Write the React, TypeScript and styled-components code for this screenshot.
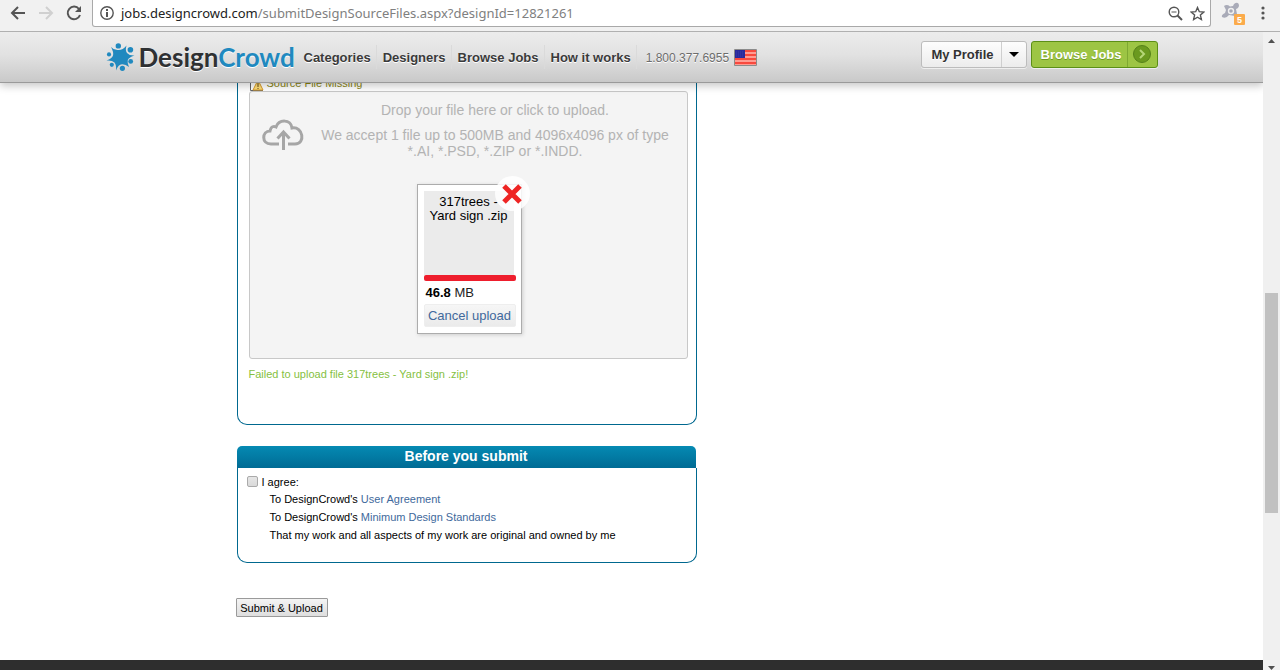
import React from 'react';
import styled, { createGlobalStyle } from 'styled-components';

const Global = createGlobalStyle`
  * { box-sizing: border-box; }
  body { margin: 0; font-family: "Liberation Sans", Arial, sans-serif; background: #fff; color: #000; }
  button { font-family: inherit; margin: 0; padding: 0; cursor: pointer; }
  a { color: #41699c; text-decoration: none; }
`;

const Window = styled.div`
  height: 100vh;
  display: flex;
  flex-direction: column;
  overflow: hidden;
`;

const Toolbar = styled.div`
  flex: none;
  height: 32px;
  display: flex;
  align-items: flex-start;
  padding: 0 9px 0 7px;
  background: #f1f1f1;
  border-bottom: 1px solid #b0b0b0;
`;

const ToolButton = styled.button<{ $width: number }>`
  width: ${(p) => p.$width}px;
  height: 26px;
  flex: none;
  display: flex;
  align-items: center;
  justify-content: center;
  border: 0;
  background: none;
  svg { display: block; }
`;

const Omnibox = styled.div`
  flex: 1;
  min-width: 0;
  height: 27px;
  display: flex;
  align-items: center;
  margin: 0 0 0 7px;
  padding: 0 2px 0 3px;
  background: #fff;
  border: 1px solid #a9a9a9;
  border-top: 0;
  border-radius: 0 0 3px 3px;
`;

const Address = styled.div`
  flex: 1;
  min-width: 0;
  padding-left: 3px;
  font: 13px/24px "Noto Sans", "Open Sans", sans-serif;
  white-space: nowrap;
  overflow: hidden;
  color: #808080;
  span { color: #222; }
`;

const Viewport = styled.div`
  flex: 1;
  min-height: 0;
  display: flex;
`;

const Page = styled.div`
  flex: 1;
  min-width: 0;
  overflow: hidden;
  display: flex;
  flex-direction: column;
`;

const Header = styled.header`
  flex: none;
  height: 51px;
  position: relative;
  z-index: 2;
  background: linear-gradient(#ececec, #e2e2e2 45%, #c9c9c9);
  border-bottom: 1px solid #9a9a9a;
  box-shadow: 0 3px 8px rgba(0, 0, 0, 0.22);
`;

const Container = styled.div`
  max-width: 1052px;
  margin: 0 auto;
`;

const HeaderRow = styled(Container)`
  height: 50px;
  display: flex;
  align-items: center;
`;

const Logo = styled.a`
  display: flex;
  align-items: center;
  width: 192px;
  gap: 4px;
  font: bold 26px/40px Lato, "Open Sans", sans-serif;
  color: #2f3133;
  text-shadow: 0 1px 0 #fff;
  span { color: #2089bf; }
  svg { flex: none; }
`;

const Nav = styled.nav`
  display: flex;
  align-items: center;
  a {
    padding: 2px 5px 0 6px;
    font: bold 13px/22px "Liberation Sans", Arial, sans-serif;
    color: #3a3a3a;
    text-shadow: 0 1px 0 #fff;
    border-right: 1px solid #dadada;
    white-space: nowrap;
  }
`;

const Phone = styled.span`
  padding: 2px 5px 0 9px;
  font: 12px/22px "Liberation Sans", Arial, sans-serif;
  color: #6c6c6c;
  text-shadow: 0 1px 0 #fff;
`;

const Actions = styled.div`
  margin-left: auto;
  display: flex;
  gap: 4px;
  padding-bottom: 6px;
`;

const SplitButton = styled.div<{ $green?: boolean }>`
  display: flex;
  height: 27px;
  border: 1px solid ${(p) => (p.$green ? '#5c8f17' : '#bcbcbc')};
  border-radius: 3px;
  background: ${(p) => (p.$green ? '#9dc544' : 'linear-gradient(#fdfdfd, #ececec)')};
  box-shadow: 0 1px 0 rgba(255, 255, 255, 0.6);
  button {
    border: 0;
    background: none;
    font-size: 13px;
    font-weight: bold;
    color: ${(p) => (p.$green ? '#fff' : '#333')};
    text-shadow: 0 1px 0 ${(p) => (p.$green ? '#6f9a25' : '#fff')};
  }
  button:first-child { padding: ${(p) => (p.$green ? '0 5px 0 9px' : '0 7px 0 9px')}; }
  button:last-child {
    width: ${(p) => (p.$green ? 30 : 25)}px;
    display: flex;
    align-items: center;
    justify-content: center;
    border-left: 1px solid ${(p) => (p.$green ? '#7fa932' : '#cfcfcf')};
  }
`;

const Main = styled(Container)`
  width: 100%;
  flex: 1 0 auto;
  margin-top: -8px;
  padding-left: 130px;
`;

const Panel = styled.section`
  width: 460px;
  margin-left: 1px;
`;

const PanelBody = styled.div<{ $bottom: number }>`
  padding: 0 8px ${(p) => p.$bottom}px 11px;
  border: 1px solid #00688f;
  border-top: 0;
  border-radius: 0 0 10px 10px;
`;

const PanelTitle = styled.h2`
  margin: 21px 1px 0 0;
  padding-bottom: 2px;
  font-size: 14px;
  line-height: 20px;
  text-align: center;
  color: #fff;
  background: linear-gradient(#058ab3, #006b94);
  border-radius: 5px 5px 0 0;
`;

const Warning = styled.div`
  height: 16px;
  display: flex;
  align-items: center;
  gap: 3px;
  font-size: 11px;
  line-height: 16px;
  color: #8a8512;
`;

const DropZone = styled.div`
  padding: 10px 10px 24px 12px;
  background: #f4f4f4;
  border: 1px solid #c8c8c8;
  border-radius: 3px;
`;

const DropHint = styled.div`
  display: flex;
  align-items: flex-start;
  gap: 10px;
  > svg { flex: none; margin-top: 17px; }
`;

const HintText = styled.div`
  flex: 1;
  font-size: 14px;
  line-height: 16px;
  text-align: center;
  color: #b3b3b3;
  p { margin: 0 0 9px; white-space: nowrap; }
`;

const FileCard = styled.div`
  position: relative;
  width: 105px;
  height: 150px;
  margin: 16px auto 0;
  padding: 6px 5px 0 6px;
  background: #fff;
  border: 1px solid #acacac;
  box-shadow: 1px 1px 4px rgba(0, 0, 0, 0.16);
  font-size: 13px;
`;

const Thumb = styled.div`
  width: 90px;
  height: 84px;
  padding: 4px 5px 0;
  line-height: 14px;
  text-align: center;
  background: #ebebeb;
`;

const Progress = styled.div`
  height: 6px;
  background: #ee1e2d;
  border-radius: 2px;
`;

const FileSize = styled.div`
  padding: 4px 2px;
  line-height: 15px;
  color: #222;
  b { color: #000; }
`;

const CancelButton = styled.button`
  display: block;
  width: 92px;
  height: 23px;
  border: 1px solid #eee;
  border-radius: 2px;
  background: linear-gradient(#f6f6f6, #ebebeb);
  font-size: 13px;
  color: #41699c;
`;

const RemoveButton = styled.button`
  position: absolute;
  top: -9px;
  right: -9px;
  width: 35px;
  height: 35px;
  display: flex;
  align-items: center;
  justify-content: center;
  border: 0;
  border-radius: 50%;
  background: rgba(255, 255, 255, 0.85);
`;

const ErrorText = styled.p`
  margin: 8px 0 0;
  font-size: 11px;
  line-height: 15px;
  color: #86bf3f;
`;

const Agreement = styled.div`
  margin-left: -2px;
  padding-top: 6px;
  font-size: 11px;
  line-height: 18px;
  label { display: flex; align-items: center; gap: 4px; line-height: 16px; }
  ul { margin: 0; padding: 0 0 0 23px; list-style: none; }
`;

const Checkbox = styled.input`
  appearance: none;
  width: 11px;
  height: 11px;
  margin: 0 0 2px;
  border: 1px solid #aaa;
  border-radius: 2px;
  background: linear-gradient(#e6e6e6, #dadada);
  &:checked { background: #00688f; }
`;

const SubmitButton = styled.button`
  display: block;
  width: 92px;
  height: 19px;
  margin-top: 35px;
  border: 1px solid #9a9a9a;
  border-radius: 1px;
  background: linear-gradient(#f4f4f4, #dedede);
  font-size: 11px;
  color: #000;
`;

const Footer = styled.footer`
  flex: none;
  height: 10px;
  background: #2e2e2e;
`;

const ScrollTrack = styled.div`
  flex: none;
  width: 17px;
  display: flex;
  flex-direction: column;
  align-items: center;
  justify-content: space-between;
  padding: 7px 2px 0;
  background: #f0f0f0;
`;

const ScrollThumb = styled.div`
  width: 13px;
  height: 35%;
  margin-top: 97px;
  background: #c1c1c1;
`;

const Arrow = ({ right }: { right?: boolean }) => (
  <svg width="16" height="16" viewBox="0 0 16 16" fill="none" stroke={right ? '#d0d0d0' : '#555'} strokeWidth="2">
    <path d={right ? 'M1 8H14M8 2L14 8L8 14' : 'M15 8H2M8 2L2 8L8 14'} />
  </svg>
);

const people = [
  [118.3, 45.9, 2.7], [130.4, 49.8, 2.8], [130.7, 61.4, 2.4], [122.4, 68.3, 2.6],
  [111.8, 64.8, 2.1], [109, 54.4, 2.1],
];

const LogoMark = () => (
  <svg width="29" height="30" viewBox="106 42 29 30" fill="#2089bf">
    <path d="M111 47Q114 50.500 118.500 50Q123 50 126.500 45.500Q125 50.500 127 53Q129.500 55.800 134.500 55.500Q128.500 57.500 127.800 60Q127 63 129 67Q125.500 64 122 64.200Q118 64.800 116 70.500Q116.500 65 114.500 62.500Q112 60 106.500 60.500Q112 58.500 113 55.500Q113.800 52 111 47Z" />
    {people.map(([x, y, r]) => <circle key={x} cx={x} cy={y} r={r} />)}
  </svg>
);

const Flag = () => (
  <svg width="23" height="17" viewBox="0 0 23 17">
    <rect width="23" height="17" rx="1" fill="#8b8b8b" />
    <rect x="1" y="1" width="21" height="15" fill="#ff9c92" />
    {[1, 5, 9, 13].map((y) => <rect key={y} x="1" y={y} width="21" height="2" fill="#f8493e" />)}
    <rect x="1" y="1" width="10" height="8" fill="#2a2a9c" />
    <path d="M2 3H10M2 5H10M2 7H10" stroke="#3c3cab" strokeDasharray="1 1" />
  </svg>
);

const CloudUpload = () => (
  <svg width="42" height="32" viewBox="0 0 42 32" fill="none" stroke="#a6a6a6" strokeWidth="3">
    <path d="M17 25H9C-1 25 0 12 8 12C9 7 12 7 14 8C17 0 29 0 30 9C41 7 44 25 33 25H26" />
    <path d="M21.500 31V14M15.500 19.500L21.500 13L27.500 19.500" />
  </svg>
);

export default function App() {
  return (
    <Window>
      <Global />
      <Toolbar>
        <ToolButton $width={22} aria-label="Back"><Arrow /></ToolButton>
        <ToolButton $width={34} aria-label="Forward"><Arrow right /></ToolButton>
        <ToolButton $width={22} aria-label="Reload">
          <svg width="16" height="16" viewBox="0 0 16 16">
            <path d="M13 4A6.300 6.300 0 1 0 14 10" fill="none" stroke="#555" strokeWidth="2" />
            <path d="M15 1V7H9Z" fill="#555" />
          </svg>
        </ToolButton>
        <Omnibox>
          <ToolButton $width={22} aria-label="Site information">
            <svg width="14" height="14" viewBox="0 0 14 14">
              <circle cx="7" cy="7" r="6.200" fill="none" stroke="#555" strokeWidth="1.400" />
              <path d="M6 6H8V11H6ZM6 3H8V5H6Z" fill="#555" />
            </svg>
          </ToolButton>
          <Address><span>jobs.designcrowd.com</span>/submitDesignSourceFiles.aspx?designId=12821261</Address>
          <ToolButton $width={22} aria-label="Zoom">
            <svg width="15" height="15" viewBox="0 0 15 15" fill="none" stroke="#555">
              <circle cx="6" cy="6" r="4.800" strokeWidth="1.400" />
              <path d="M9.500 9.500L14 14" strokeWidth="2" />
              <path d="M3.500 6H8.500" />
            </svg>
          </ToolButton>
          <ToolButton $width={22} aria-label="Bookmark">
            <svg width="15" height="15" viewBox="0 0 15 15" fill="none" stroke="#555" strokeWidth="1.400">
              <path d="M7.500 1.500L9.300 5.700L13.800 6.100L10.400 9.100L11.400 13.500L7.500 11.200L3.600 13.500L4.600 9.100L1.200 6.100L5.700 5.700Z" />
            </svg>
          </ToolButton>
        </Omnibox>
        <ToolButton $width={44} aria-label="Extension">
          <svg width="24" height="24" viewBox="0 0 24 24">
            <path d="M3 5Q6 3 9 5.500L12 5L13 3Q17 0 18 4Q18 7 15 8L16 13L14 15L8 14Q5 18 1 16Q0 14 4 12L5 9Z" fill="#a9abb8" />
            <circle cx="10" cy="10" r="2.500" fill="none" stroke="#f1f1f1" strokeWidth="1.400" />
            <rect x="13" y="13" width="11" height="11" rx="1" fill="#fbab4b" />
            <text x="16" y="22" fontSize="9" fontWeight="bold" fill="#fff" fontFamily="Liberation Sans">5</text>
          </svg>
        </ToolButton>
        <ToolButton $width={16} aria-label="Menu">
          <svg width="4" height="14" viewBox="0 0 4 14" fill="#555">
            <circle cx="2" cy="2" r="1.600" /><circle cx="2" cy="7" r="1.600" /><circle cx="2" cy="12" r="1.600" />
          </svg>
        </ToolButton>
      </Toolbar>
      <Viewport>
        <Page>
          <Header>
            <HeaderRow>
              <Logo href="#"><LogoMark /><div>Design<span>Crowd</span></div></Logo>
              <Nav>
                <a href="#">Categories</a>
                <a href="#">Designers</a>
                <a href="#">Browse Jobs</a>
                <a href="#">How it works</a>
              </Nav>
              <Phone>1.800.377.6955</Phone>
              <Flag />
              <Actions>
                <SplitButton>
                  <button>My Profile</button>
                  <button aria-label="Open profile menu">
                    <svg width="10" height="5" viewBox="0 0 10 5"><path d="M0 0H10L5 5Z" fill="#000" /></svg>
                  </button>
                </SplitButton>
                <SplitButton $green>
                  <button>Browse Jobs</button>
                  <button aria-label="Go to jobs">
                    <svg width="18" height="18" viewBox="0 0 18 18">
                      <circle cx="9" cy="9" r="8.500" fill="#6b9a1f" stroke="#56821a" />
                      <path d="M7 5L11 9L7 13" fill="none" stroke="#b5d777" strokeWidth="2" />
                    </svg>
                  </button>
                </SplitButton>
              </Actions>
            </HeaderRow>
          </Header>
          <Main as="main">
            <Panel>
              <PanelBody $bottom={42}>
                <Warning>
                  <svg width="15" height="16" viewBox="0 0 15 16">
                    <path d="M1.500 0V15.500H14" fill="none" stroke="#666" />
                    <path d="M9 5L14 15H4Z" fill="#ffdf7a" stroke="#d79a2b" />
                    <path d="M9 8V12M9 13V14" stroke="#6a4a10" />
                  </svg>
                  Source File Missing
                </Warning>
                <DropZone>
                  <DropHint>
                    <CloudUpload />
                    <HintText>
                      <p>Drop your file here or click to upload.</p>
                      <p>We accept 1 file up to 500MB and 4096x4096 px of type<br />*.AI, *.PSD, *.ZIP or *.INDD.</p>
                    </HintText>
                  </DropHint>
                  <FileCard>
                    <Thumb>317trees - Yard sign .zip</Thumb>
                    <Progress />
                    <FileSize><b>46.8</b> MB</FileSize>
                    <CancelButton>Cancel upload</CancelButton>
                    <RemoveButton aria-label="Remove file">
                      <svg width="20" height="20" viewBox="0 0 20 20">
                        <path d="M2 2L18 18M18 2L2 18" stroke="#ee2524" strokeWidth="5" />
                      </svg>
                    </RemoveButton>
                  </FileCard>
                </DropZone>
                <ErrorText>Failed to upload file 317trees - Yard sign .zip!</ErrorText>
              </PanelBody>
            </Panel>
            <Panel>
              <PanelTitle>Before you submit</PanelTitle>
              <PanelBody $bottom={18}>
                <Agreement>
                  <label><Checkbox type="checkbox" />I agree:</label>
                  <ul>
                    <li>To DesignCrowd's <a href="#">User Agreement</a></li>
                    <li>To DesignCrowd's <a href="#">Minimum Design Standards</a></li>
                    <li>That my work and all aspects of my work are original and owned by me</li>
                  </ul>
                </Agreement>
              </PanelBody>
            </Panel>
            <SubmitButton>Submit &amp; Upload</SubmitButton>
          </Main>
          <Footer />
        </Page>
        <ScrollTrack>
          <svg width="7" height="4" viewBox="0 0 7 4"><path d="M0 4H7L3.500 0Z" fill="#505050" /></svg>
          <ScrollThumb />
          <svg width="7" height="4" viewBox="0 0 7 4"><path d="M0 0H7L3.500 4Z" fill="#505050" /></svg>
        </ScrollTrack>
      </Viewport>
    </Window>
  );
}
